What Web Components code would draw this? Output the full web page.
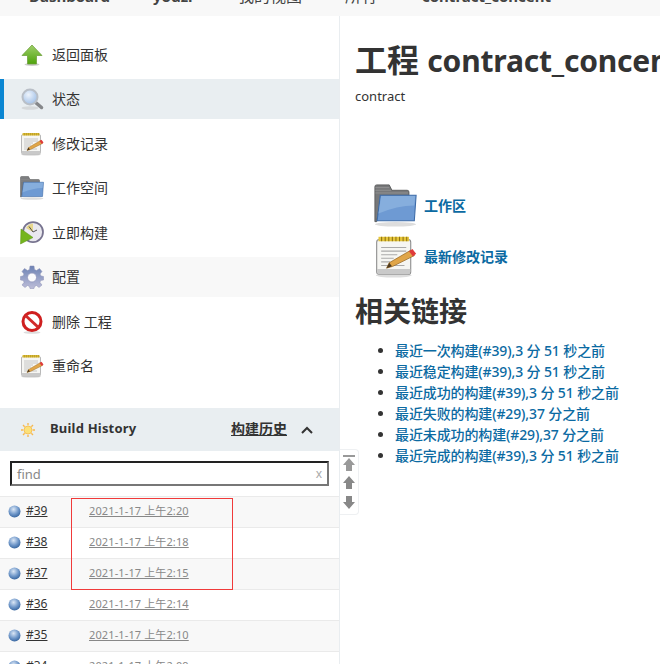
<!DOCTYPE html>
<html lang="zh">
<head>
<meta charset="utf-8">
<title>contract_concent</title>
<style>
  html, body { margin: 0; height: 664px; overflow: hidden; background: #fff; }
  body { font-family: "Noto Sans", "Noto Sans CJK SC", sans-serif; color: #333; }
  jk-main a { color: #0b6aa2; font-weight: 500; letter-spacing: -.12px; }
  h1 span { font-size: 30px; letter-spacing: -.2px; }
</style>
</head>
<body>
<jk-page>
  <jk-topbar slot="top">
    <a style="font-weight:700;width:124px">Dashboard</a>
    <a style="font-weight:700;width:85px">youzi</a>
    <a style="font-size:16px;width:107px">我的视图</a>
    <a style="font-size:16px;width:77px">所有</a>
    <a style="font-weight:700">contract_concent</a>
  </jk-topbar>
  <jk-sidebar slot="side">
    <jk-task icon="up">返回面板</jk-task>
    <jk-task icon="search" active>状态</jk-task>
    <jk-task icon="notepad">修改记录</jk-task>
    <jk-task icon="folder">工作空间</jk-task>
    <jk-task icon="clock">立即构建</jk-task>
    <jk-task icon="gear" hover>配置</jk-task>
    <jk-task icon="stop">删除 工程</jk-task>
    <jk-task icon="notepad">重命名</jk-task>
    <jk-history>
      <jk-build num="#39" time="2021-1-17 上午2:20"></jk-build>
      <jk-build num="#38" time="2021-1-17 上午2:18"></jk-build>
      <jk-build num="#37" time="2021-1-17 上午2:15"></jk-build>
      <jk-build num="#36" time="2021-1-17 上午2:14"></jk-build>
      <jk-build num="#35" time="2021-1-17 上午2:10"></jk-build>
      <jk-build num="#34" time="2021-1-17 上午2:09"></jk-build>
    </jk-history>
  </jk-sidebar>
  <jk-main slot="main">
    <h1 slot="title">工程 <span>contract_concent</span></h1>
    <jk-permalink icon="folder">工作区</jk-permalink>
    <jk-permalink icon="notepad">最新修改记录</jk-permalink>
    <li slot="links"><a>最近一次构建(#39),3 分 51 秒之前</a></li>
    <li slot="links"><a>最近稳定构建(#39),3 分 51 秒之前</a></li>
    <li slot="links"><a>最近成功的构建(#39),3 分 51 秒之前</a></li>
    <li slot="links"><a>最近失败的构建(#29),37 分之前</a></li>
    <li slot="links"><a>最近未成功的构建(#29),37 分之前</a></li>
    <li slot="links"><a>最近完成的构建(#39),3 分 51 秒之前</a></li>
  </jk-main>
</jk-page>

<script>
// all icons are 48x48 viewBox, scaled by whoever uses them
const ICONS = {
  up: `<defs><linearGradient id="u" x1="0" y1="0" x2="0" y2="1"><stop offset="0" stop-color="#9fcf6a"/><stop offset="1" stop-color="#4ea30c"/></linearGradient></defs>
    <ellipse cx="24" cy="43" rx="15" ry="3" fill="#ccc"/>
    <path d="M24 4 44 25H33V42H15V25H4Z" fill="url(#u)" stroke="#6d9f3a" stroke-width="1.5" stroke-linejoin="round"/>`,
  search: `<defs><radialGradient id="s" cx=".4" cy=".35" r=".7"><stop offset="0" stop-color="#eef4fc"/><stop offset="1" stop-color="#9dbde6"/></radialGradient></defs>
    <ellipse cx="20" cy="42" rx="17" ry="3.5" fill="#d5d8da"/>
    <path d="M30 30 43 41" stroke="#85878a" stroke-width="7" stroke-linecap="round"/>
    <circle cx="20" cy="20" r="15" fill="url(#s)" stroke="#b9bfc7" stroke-width="4"/>`,
  notepad: `<ellipse cx="22" cy="45" rx="20" ry="2.5" fill="#ddd"/>
    <path d="M3 8Q3 5 6 5H38Q41 5 41 8V41Q41 44 38 44H6Q3 44 3 41Z" fill="#f6f6f3" stroke="#8b8b8b" stroke-width="1.2"/>
    <path d="M3.500 38H40.500V41Q40.500 44 38 44H6Q3.500 44 3.500 41Z" fill="#c9c9c9"/>
    <path d="M5 2H39V7H5Z" fill="#e6c63a"/>
    <path d="M8.500 2V7M12.500 2V7M16.500 2V7M20.500 2V7M24.500 2V7M28.500 2V7M32.500 2V7M36.500 2V7" stroke="#8f7414" stroke-width="1.200"/>
    <path d="M8 14H36M8 18H36M8 22H26M8 26H22M8 30H18M8 34H34" stroke="#aaa" stroke-width="1.2"/>
    <path d="M14 37 17 31 41 17 45 23 21 35Z" fill="#e0a548" stroke="#94641d" stroke-width=".8"/>
    <path d="M14 37 17 31 20 35Z" fill="#4d3a20"/>
    <path d="M39 18 43 15.500 47 21 43.500 24Z" fill="#df3b3b"/>`,
  folder: `<ellipse cx="24" cy="45" rx="23" ry="2.500" fill="#ddd"/>
    <path d="M1 3Q1 1 3 1H17L20 7H37Q39 7 39 9V14H8L3 42H1Z" fill="#77787a" stroke="#58595b"/>
    <path d="M1.500 4H17M1.500 7H19M1.500 10H38" stroke="#9a9a9a" stroke-width=".8"/>
    <path d="M7 12.500H47L45 41H3.500Z" fill="#6e9ad3" stroke="#3e6ca8" stroke-width="1.200"/>
    <path d="M8 13.500H46L45 24Q26 24 5 33Z" fill="#86aedd"/>`,
  clock: `<circle cx="26" cy="22" r="20" fill="#e9e8ee" stroke="#77738f" stroke-width="3.500"/>
    <path d="M26 5A17 17 0 0 0 12 14L26 22Z" fill="#e7d68b"/>
    <path d="M26 22 18 11M26 22 34 18" stroke="#444" stroke-width="1.800"/>
    <path d="M2 16 26 33 1 46Z" fill="#74b51e" stroke="#5b9312"/>`,
  gear: `<defs><linearGradient id="g" x1="0" y1="0" x2="0" y2="1"><stop offset="0" stop-color="#6c82b4"/><stop offset="1" stop-color="#bdbdd8"/></linearGradient></defs>
    <path d="M20 2H28L29 9 33 11 39 7 44 13 40 18 42 22 47 23V30L41 31 40 35 44 40 38 45 33 41 29 43 28 47H20L19 43 15 41 10 45 4 40 8 35 7 31 1 30V23L6 22 8 18 4 13 9 7 15 11 19 9Z" fill="url(#g)" stroke="#8b8fb5"/>
    <circle cx="24" cy="25" r="9" fill="#fbfbfd" stroke="#8e92b8" stroke-width="1.500"/>`,
  stop: `<ellipse cx="24" cy="45" rx="17" ry="2.500" fill="#ddd"/>
    <circle cx="24" cy="23" r="18" fill="#fff" stroke="#cf1f1f" stroke-width="6"/>
    <path d="M11 11 37 35" stroke="#d12a2a" stroke-width="6"/>`,
  sun: `<circle cx="24" cy="24" r="12" fill="#fce27a" stroke="#f5b040" stroke-width="2"/>
    <path d="M24 3V10M24 38V45M3 24H10M38 24H45M9 9 14 14M34 34 39 39M39 9 34 14M14 34 9 39" stroke="#f7b84e" stroke-width="4"/>`
};

function define(name, html) {
  customElements.define(name, class extends HTMLElement {
    constructor() {
      super();
      this.attachShadow({ mode: 'open' }).innerHTML = html;
    }
  });
}

customElements.define('jk-icon', class extends HTMLElement {
  connectedCallback() {
    const size = this.getAttribute('size') || 24;
    this.attachShadow({ mode: 'open' }).innerHTML = `
      <style>:host { display: block; width: ${size}px; height: ${size}px; flex: none; } svg { display: block; }</style>
      <svg width="${size}" height="${size}" viewBox="0 0 48 48">${ICONS[this.getAttribute('name')]}</svg>`;
  }
});

define('jk-page', `
  <style>
    :host { display: grid; grid-template-columns: 340px 320px; grid-template-rows: 16px 648px; height: 664px; overflow: hidden; }
    .top { grid-column: 1 / 3; }
  </style>
  <div class="top"><slot name="top"></slot></div>
  <slot name="side"></slot>
  <slot name="main"></slot>`);

define('jk-topbar', `
  <style>
    :host { display: flex; align-items: flex-end; height: 16px; padding: 0 0 0 29px; background: #f8f8f8; overflow: hidden; }
    div { display: flex; height: 6px; line-height: 20px; align-items: flex-end; font-size: 15px; color: #444; white-space: nowrap; margin-bottom: 10px; }
    ::slotted(a) { display: block; flex: none; }
  </style>
  <div><slot></slot></div>`);

define('jk-sidebar', `
  <style>
    :host { display: block; position: relative; border-right: 1px solid #e9edf0; padding-top: 18.5px; height: 629.5px; overflow: hidden; }
    .tasks { display: flex; flex-direction: column; gap: 4.5px; }
  </style>
  <div class="tasks"><slot></slot></div>`);

customElements.define('jk-task', class extends HTMLElement {
  connectedCallback() {
    this.attachShadow({ mode: 'open' }).innerHTML = `
      <style>
        :host { display: flex; align-items: center; height: 40px; padding-left: 20px; gap: 8px; font-size: 14px; color: #333; box-sizing: border-box; }
        :host([active]) { background: #e9eef1; border-left: 4px solid #0b86d2; padding-left: 16px; }
        :host([hover]) { background: #f8f8f8; }
        span { margin-top: -2px; }
      </style>
      <jk-icon name="${this.getAttribute('icon')}" size="24"></jk-icon>
      <span><slot></slot></span>`;
  }
});

define('jk-history', `
  <style>
    :host { display: block; margin-top: 17.5px; position: relative; }
    header { display: flex; align-items: center; height: 43px; background: #e9eef1; padding-left: 20px; font-size: 13px; color: #333; }
    b { margin: -3px 0 0 14px; letter-spacing: .2px; }
    u { margin: -3px 0 0 auto; font-weight: 700; font-size: 14px; color: #333; }
    svg.chev { margin: 0 26px 0 14px; }
    .search { padding: 10px; height: 45px; box-sizing: border-box; }
    .box { display: flex; justify-content: space-between; align-items: center; height: 25px; box-sizing: border-box; border: 2px solid; border-color: #222 #777 #777 #222; padding: 0 5px; font-size: 13px; color: #888; }
    .x { font-size: 12px; color: #aaa; }
    .mark { position: absolute; left: 71px; top: 90px; width: 162px; height: 92px; box-sizing: border-box; border: 1px solid #f03a3a; pointer-events: none; }
    .rows { display: flex; flex-direction: column; }
  </style>
  <header>
    <jk-icon name="sun" size="16"></jk-icon>
    <b>Build History</b>
    <u>构建历史</u>
    <svg class="chev" width="12" height="8" viewBox="0 0 12 8"><path d="M1 7 6 2 11 7" fill="none" stroke="#333" stroke-width="2"/></svg>
  </header>
  <div class="search"><div class="box"><span>find</span><span class="x">x</span></div></div>
  <div class="rows"><slot></slot></div>
  <div class="mark"></div>`);

customElements.define('jk-build', class extends HTMLElement {
  connectedCallback() {
    this.attachShadow({ mode: 'open' }).innerHTML = `
      <style>
        :host { display: flex; align-items: center; height: 31px; box-sizing: border-box; border-top: 1px solid #eaeaea; padding: 0 0 4px 8px; font-size: 12px; background: #fff; }
        :host(:nth-child(odd)) { background: #f8f8f8; }
        svg { flex: none; margin-right: 5px; margin-top: 2px; }
        .n { width: 63px; color: #333; text-decoration: underline; }
        .t { color: #888; text-decoration: underline; font-size: 11px; letter-spacing: .12px; }
      </style>
      <svg width="13" height="13" viewBox="0 0 13 13">
        <defs><radialGradient id="b" cx=".42" cy=".32" r=".75"><stop offset="0" stop-color="#dbe7f6"/><stop offset=".55" stop-color="#6f97c9"/><stop offset="1" stop-color="#2d5c97"/></radialGradient></defs>
        <circle cx="6.500" cy="6.500" r="6" fill="url(#b)"/>
      </svg>
      <span class="n">${this.getAttribute('num')}</span>
      <span class="t">${this.getAttribute('time')}</span>`;
  }
});

define('jk-main', `
  <style>
    :host { display: block; position: relative; padding: 19px 0 0 15px; overflow: hidden; height: 629px; color: #333; }
    ::slotted(h1) { margin: 0; font-size: 32px; line-height: 50px; height: 50px; font-weight: 700; white-space: nowrap; color: #333; }
    .desc { margin-top: 2px; font-size: 13px; line-height: 18px; }
    .perma { display: flex; flex-direction: column; gap: 7px; margin: 78px 0 0 19px; }
    h2 { margin: 13px 0 0; font-size: 28px; line-height: 40px; font-weight: 700; }
    ul { margin: 9px 0 0; padding: 0 0 0 40px; font-size: 14px; line-height: 21px; white-space: nowrap; color: #333; }
    ::slotted(li) { color: #333; }
    jk-scroller { position: absolute; left: 0; top: 433px; }
  </style>
  <slot name="title"></slot>
  <div class="desc">contract</div>
  <div class="perma"><slot></slot></div>
  <h2>相关链接</h2>
  <ul><slot name="links"></slot></ul>
  <jk-scroller></jk-scroller>`);

customElements.define('jk-permalink', class extends HTMLElement {
  connectedCallback() {
    this.attachShadow({ mode: 'open' }).innerHTML = `
      <style>
        :host { display: flex; align-items: center; gap: 7px; height: 44px; font-size: 14px; font-weight: 700; color: #0b6aa2; }
        :host(:last-child) span { margin-top: 2px; }
      </style>
      <jk-icon name="${this.getAttribute('icon')}" size="43"></jk-icon>
      <span><slot></slot></span>`;
  }
});

define('jk-scroller', `
  <style>
    :host { display: flex; flex-direction: column; align-items: center; gap: 3px; width: 19px; height: 66px; box-sizing: border-box; padding-top: 5px; background: #fff; border: 1px solid #eef0f2; border-left: 0; border-radius: 0 4px 4px 0; }
    svg { display: block; }
  </style>
  <svg width="14" height="17" viewBox="0 0 14 17"><path d="M1 1H13" stroke="#999" stroke-width="2"/><path d="M7 3 13 10H10V16H4V10H1Z" fill="#999"/></svg>
  <svg width="14" height="16" viewBox="0 0 14 16"><path d="M7 1 13 8H10V14H4V8H1Z" fill="#888"/></svg>
  <svg width="14" height="16" viewBox="0 0 14 16"><path d="M7 15 13 8H10V2H4V8H1Z" fill="#888"/></svg>`);
</script>
</body>
</html>
